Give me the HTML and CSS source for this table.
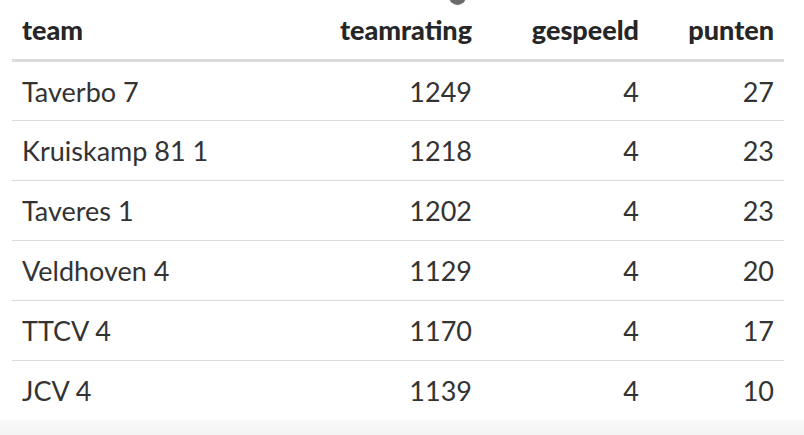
FILE: index.html
```html
<!DOCTYPE html>
<html>
<head>
<meta charset="utf-8">
<link rel="stylesheet" href="styles.css">
</head>
<body>
<div class="page">
  <span class="dot"></span>
  <div class="table">
    <div class="row head">
      <div class="cell">team</div>
      <div class="cell num">teamrating</div>
      <div class="cell num">gespeeld</div>
      <div class="cell num">punten</div>
    </div>
    <div class="row first">
      <div class="cell">Taverbo 7</div>
      <div class="cell num">1249</div>
      <div class="cell num">4</div>
      <div class="cell num">27</div>
    </div>
    <div class="row">
      <div class="cell">Kruiskamp 81 1</div>
      <div class="cell num">1218</div>
      <div class="cell num">4</div>
      <div class="cell num">23</div>
    </div>
    <div class="row">
      <div class="cell">Taveres 1</div>
      <div class="cell num">1202</div>
      <div class="cell num">4</div>
      <div class="cell num">23</div>
    </div>
    <div class="row">
      <div class="cell">Veldhoven 4</div>
      <div class="cell num">1129</div>
      <div class="cell num">4</div>
      <div class="cell num">20</div>
    </div>
    <div class="row">
      <div class="cell">TTCV 4</div>
      <div class="cell num">1170</div>
      <div class="cell num">4</div>
      <div class="cell num">17</div>
    </div>
    <div class="row last">
      <div class="cell">JCV 4</div>
      <div class="cell num">1139</div>
      <div class="cell num">4</div>
      <div class="cell num">10</div>
    </div>
  </div>
  <div class="foot"></div>
</div>
</body>
</html>
```
FILE: styles.css
```css
html, body {
  margin: 0;
  padding: 0;
  background: #fff;
}
.page {
  position: relative;
  width: 804px;
  height: 435px;
  overflow: hidden;
  font-family: Lato, "Open Sans", sans-serif;
  color: #333;
}
.dot {
  position: absolute;
  left: 449px;
  top: -12px;
  width: 17px;
  height: 17px;
  border-radius: 50%;
  background: #6b6b6b;
}
.table {
  margin: 0 20px 0 12px;
}
.row {
  display: grid;
  grid-template-columns: 1fr 142px 167px 135px;
  height: 59px;
  border-bottom: 1px solid #dcdcdc;
  font-size: 27px;
}
.row.head {
  height: 59px;
  border-bottom: 3px solid #dcdcdc;
  font-weight: 900;
  color: #262626;
}
.row.first {
  height: 58px;
}
.row.last {
  border-bottom: none;
}
.cell {
  display: flex;
  align-items: center;
  padding: 0 10px;
}
.cell.num {
  justify-content: flex-end;
}
.foot {
  height: 20px;
  background: linear-gradient(#fafafa, #f1f1f1);
}
```
